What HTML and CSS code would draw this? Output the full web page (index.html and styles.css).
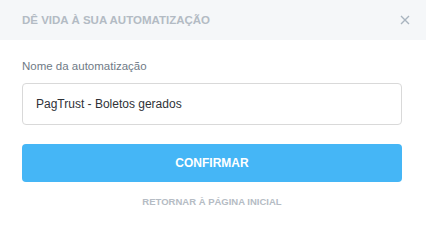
FILE: index.html
```html
<!DOCTYPE html>
<html lang="pt-BR">
<head>
    <meta charset="UTF-8">
    <meta name="viewport" content="width=device-width, initial-scale=1.0">
    <title>Dê vida à sua automatização</title>
    <link rel="stylesheet" href="styles.css">
</head>
<body>
    <div class="modal">
        <div class="cabecalho">
            <h2>DÊ VIDA À SUA AUTOMATIZAÇÃO</h2>
            <button class="fechar" aria-label="Fechar">
                <svg width="10" height="10" viewBox="0 0 10 10">
                    <path d="M1 1L9 9M9 1L1 9" stroke="#a9b4bf" stroke-width="1.4" fill="none"/>
                </svg>
            </button>
        </div>
        <div class="corpo">
            <label class="rotulo" for="nome">Nome da automatização</label>
            <input id="nome" class="campo" type="text" value="PagTrust - Boletos gerados">
            <button class="confirmar">CONFIRMAR</button>
            <a class="retornar" href="#">RETORNAR À PÁGINA INICIAL</a>
        </div>
    </div>
</body>
</html>
```
FILE: styles.css
```css
* {
    margin: 0;
    padding: 0;
    box-sizing: border-box;
}
body {
    font-family: "Liberation Sans", Arial, sans-serif;
    background-color: #fff;
}
.modal {
    width: 426px;
    height: 227px;
    background-color: #fff;
}
.cabecalho {
    height: 40px;
    background-color: #f5f7f9;
    display: flex;
    align-items: center;
    justify-content: space-between;
    padding: 0 14px 0 22px;
}
.cabecalho h2 {
    font-size: 11.5px;
    font-weight: bold;
    color: #b3bbc4;
}
.fechar {
    background: none;
    border: none;
    width: 14px;
    height: 14px;
    display: flex;
    align-items: center;
    justify-content: center;
    cursor: pointer;
}
.corpo {
    padding: 19px 24px 0 22px;
    display: flex;
    flex-direction: column;
}
.rotulo {
    font-size: 11.5px;
    color: #6f7a86;
    line-height: 14px;
}
.campo {
    margin-top: 10px;
    height: 42px;
    border: 1px solid #d9d9d9;
    border-radius: 4px;
    padding: 0 13px;
    font-family: inherit;
    font-size: 12px;
    color: #2f3237;
    outline: none;
}
.confirmar {
    margin-top: 19px;
    height: 38px;
    border: none;
    border-radius: 4px;
    background-color: #45b6f6;
    color: #fff;
    font-family: inherit;
    font-size: 12px;
    font-weight: bold;
    cursor: pointer;
}
.retornar {
    margin-top: 14px;
    align-self: center;
    font-size: 9.5px;
    font-weight: bold;
    color: #b5bcc4;
    text-decoration: none;
}
```
